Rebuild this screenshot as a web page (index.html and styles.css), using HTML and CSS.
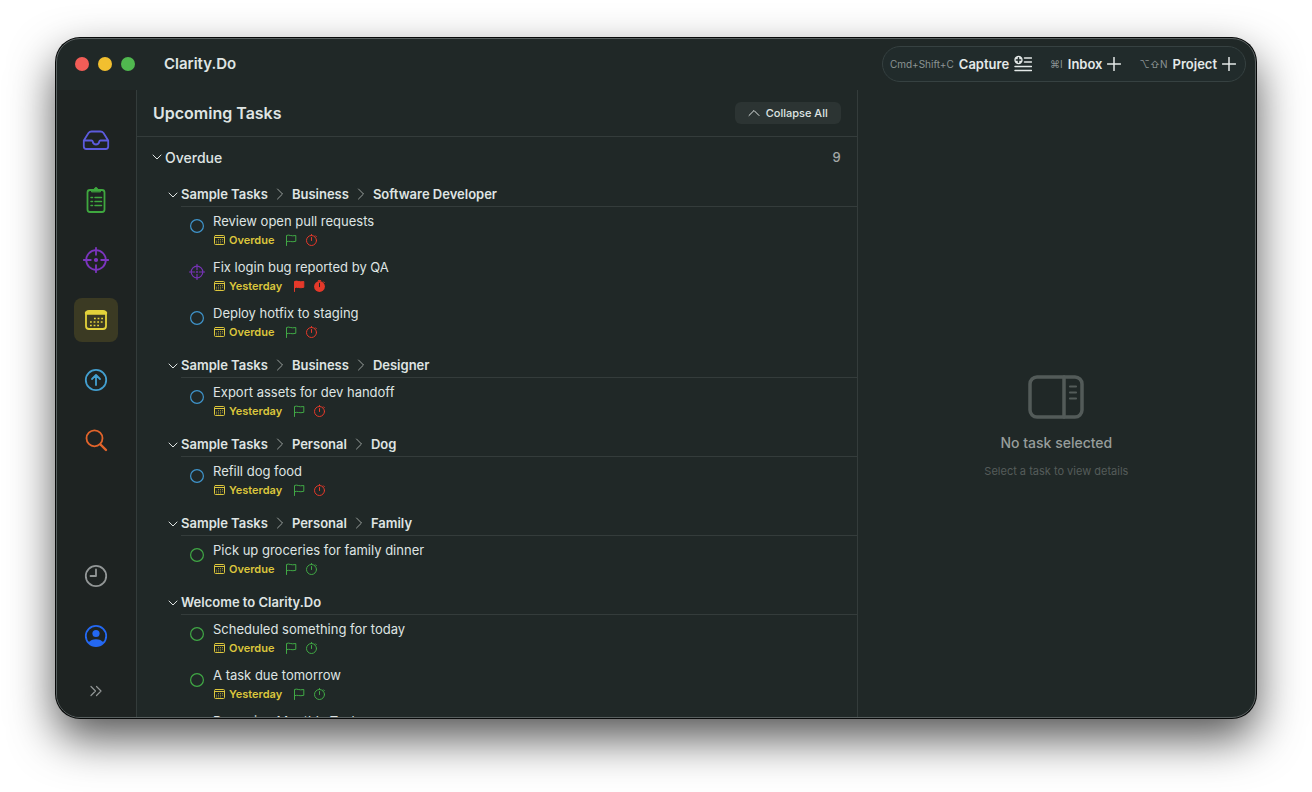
FILE: index.html
```
<!DOCTYPE html>
<html lang="en">
<head>
    <meta charset="UTF-8">
    <meta name="viewport" content="width=device-width, initial-scale=1.0">
    <title>Clarity.Do</title>
    <link rel="stylesheet" href="styles.css">
</head>
<body>
    <!-- shared icons -->
    <svg class="sprite" aria-hidden="true">
        <symbol id="down" viewBox="0 0 10 10"><path d="M1 3l4 4 4-4"/></symbol>
        <symbol id="right" viewBox="0 0 8 12"><path d="M1.5 1l5 5-5 5"/></symbol>
        <symbol id="plus" viewBox="0 0 14 14"><path d="M7 .5v13M.5 7h13"/></symbol>
        <symbol id="circle" viewBox="0 0 16 16"><circle cx="8" cy="8" r="6.4"/></symbol>
        <symbol id="target" viewBox="0 0 16 16"><circle cx="8" cy="8" r="5.8"/><path d="M8 .5v5.2M8 10.3v5.2M.5 8h5.200M10.3 8h5.2"/><circle cx="8" cy="8" r=".4"/></symbol>
        <symbol id="cal" viewBox="0 0 12 12">
            <rect x="1.5" y="1.5" width="10" height="9" rx="1"/>
            <path d="M2 3.500h9"/>
            <path d="M5 5.5h5M3 7.200h7M3 8.900h5" stroke-width=".8" stroke-linecap="butt" stroke-dasharray="1 1" opacity=".8"/>
        </symbol>
        <symbol id="flag" viewBox="0 0 12 12"><path d="M1.5 11.5V1.500c2.500-1.300 4.500 1.200 9.300 0V7.300C6.500 8.600 4.500 6.400 1.500 7.700"/></symbol>
        <symbol id="timer" viewBox="0 0 12 12"><circle cx="5.5" cy="6.500" r="5"/><path d="M5.500 .5v1M5.500 3.500v3M9.500 1.800l.8.8"/></symbol>
        <symbol id="timer-full" viewBox="0 0 12 12"><circle cx="5.5" cy="6.500" r="5.400" fill="currentColor" stroke="none"/><path d="M4.300.6h2.400M9.500 1.800l.8.8"/><path d="M5.5 3.200v3.500" stroke="#202827"/></symbol>
    </svg>

    <div class="window">
        <header class="titlebar">
            <div class="lights">
                <button class="light light-red" aria-label="Close"></button>
                <button class="light light-yellow" aria-label="Minimize"></button>
                <button class="light light-green" aria-label="Zoom"></button>
            </div>
            <h1 class="app-name">Clarity.Do</h1>
            <div class="toolbar">
                <button class="tool"><span class="keys">Cmd+Shift+C</span>Capture
                    <svg class="tool-capture" viewBox="0 0 18 18"><circle cx="4.5" cy="5" r="4.2" fill="#e4e9e8" stroke="none"/><path d="M4.5 2.800v4.400M2.300 5h4.400" stroke="#212b2b"/><path d="M10.500 3h7M10.500 7h7M1 11.500h16.500M1 15.500h16.500"/></svg>
                </button>
                <button class="tool"><span class="keys">⌘I</span>Inbox <svg class="tool-plus"><use href="#plus"/></svg></button>
                <button class="tool"><span class="keys">⌥⇧N</span>Project <svg class="tool-plus"><use href="#plus"/></svg></button>
            </div>
        </header>

        <div class="content">
            <nav class="sidebar">
                <button class="nav nav-inbox" aria-label="Inbox">
                    <svg viewBox="0 0 28 28"><path d="M1.800 14.500L6.500 7q1.100-1.500 3-1.500h9q1.900 0 3 1.500l4.700 7.500V20.500q0 2.500-2.500 2.500H4.300q-2.500 0-2.500-2.500zM2 14.500h7.500q1 0 1.200 1c.8 4 5.800 4 6.600 0q.2-1 1.200-1H26"/></svg>
                </button>
                <button class="nav nav-list" aria-label="Tasks">
                    <svg viewBox="0 0 28 28"><rect x="5.500" y="4" width="17" height="22" rx="2.500"/><path d="M9.500 5.500q0-2 2-2h.7c.3-2.800 3.300-2.800 3.600 0h.7q2 0 2 2z" fill="currentColor" stroke-width="1"/><path d="M13 11.500h6.500M13 15.500h6.500M13 19.500h6.500M9 11.500h1.500M9 15.500h1.500M9 19.500h1.500" stroke-width="1.500"/></svg>
                </button>
                <button class="nav nav-focus" aria-label="Focus">
                    <svg viewBox="0 0 28 28"><circle cx="14" cy="14" r="9.800"/><path d="M14 1.800v7M14 19.200v7M1.800 14h7M19.200 14h7"/><circle cx="14" cy="14" r="1.200" fill="currentColor"/></svg>
                </button>
                <button class="nav nav-upcoming active" aria-label="Upcoming">
                    <svg viewBox="0 0 28 28"><rect x="4" y="5" width="20" height="18" rx="3"/><path d="M4.500 7h19" stroke-width="3.500"/><path d="M12 12.500h9M8 16h13M8 19.500h9" stroke-width="1.600" stroke-linecap="butt" stroke-dasharray="1.800 1.800"/></svg>
                </button>
                <button class="nav nav-up" aria-label="Next up">
                    <svg viewBox="0 0 28 28"><circle cx="14" cy="14" r="10.200"/><path d="M14 19V9M10 13l4-4 4 4"/></svg>
                </button>
                <button class="nav nav-search" aria-label="Search">
                    <svg viewBox="0 0 28 28"><circle cx="12.500" cy="12.300" r="8"/><path d="M18.500 18.500l5.500 5.500" stroke-width="2.400"/></svg>
                </button>
                <button class="nav nav-recent" aria-label="Recent">
                    <svg viewBox="0 0 28 28"><circle cx="14" cy="14" r="10.200"/><path d="M14 7.500V14H8.500"/></svg>
                </button>
                <button class="nav nav-account" aria-label="Account">
                    <svg viewBox="0 0 28 28"><circle cx="14" cy="14" r="10.200"/><circle cx="14" cy="11.500" r="3.600" fill="currentColor" stroke="none"/><path d="M6.500 20.500c3-4.500 12-4.500 15 0q-3 3.700-7.500 3.700t-7.500-3.700z" fill="currentColor" stroke="none"/></svg>
                </button>
                <button class="nav nav-expand" aria-label="Expand sidebar">
                    <svg viewBox="0 0 14 14"><path d="M2 2.500L6.500 7 2 11.500M7.500 2.500L12 7l-4.500 4.500"/></svg>
                </button>
            </nav>

            <main class="list">
                <div class="list-head">
                    <h2>Upcoming Tasks</h2>
                    <button class="collapse"><svg viewBox="0 0 12 8"><path d="M1 6.500l5-5 5 5"/></svg>Collapse All</button>
                </div>

                <div class="list-scroll">
                    <button class="section"><svg class="down"><use href="#down"/></svg>Overdue <span class="count">9</span></button>

                    <section class="group">
                        <button class="group-head"><svg class="down"><use href="#down"/></svg>
                            <span class="crumbs">Sample Tasks<svg><use href="#right"/></svg>Business<svg><use href="#right"/></svg>Software Developer</span></button>
                        <div class="task">
                            <button class="check blue" aria-label="Complete"><svg><use href="#circle"/></svg></button>
                            <div>
                                <p class="name">Review open pull requests</p>
                                <p class="meta"><svg><use href="#cal"/></svg><span>Overdue</span><svg class="green"><use href="#flag"/></svg><svg class="red"><use href="#timer"/></svg></p>
                            </div>
                        </div>
                        <div class="task">
                            <button class="check purple" aria-label="Complete"><svg><use href="#target"/></svg></button>
                            <div>
                                <p class="name">Fix login bug reported by QA</p>
                                <p class="meta"><svg><use href="#cal"/></svg><span>Yesterday</span><svg class="red full"><use href="#flag"/></svg><svg class="red"><use href="#timer-full"/></svg></p>
                            </div>
                        </div>
                        <div class="task">
                            <button class="check blue" aria-label="Complete"><svg><use href="#circle"/></svg></button>
                            <div>
                                <p class="name">Deploy hotfix to staging</p>
                                <p class="meta"><svg><use href="#cal"/></svg><span>Overdue</span><svg class="green"><use href="#flag"/></svg><svg class="red"><use href="#timer"/></svg></p>
                            </div>
                        </div>
                    </section>

                    <section class="group">
                        <button class="group-head"><svg class="down"><use href="#down"/></svg>
                            <span class="crumbs">Sample Tasks<svg><use href="#right"/></svg>Business<svg><use href="#right"/></svg>Designer</span></button>
                        <div class="task">
                            <button class="check blue" aria-label="Complete"><svg><use href="#circle"/></svg></button>
                            <div>
                                <p class="name">Export assets for dev handoff</p>
                                <p class="meta"><svg><use href="#cal"/></svg><span>Yesterday</span><svg class="green"><use href="#flag"/></svg><svg class="red"><use href="#timer"/></svg></p>
                            </div>
                        </div>
                    </section>

                    <section class="group">
                        <button class="group-head"><svg class="down"><use href="#down"/></svg>
                            <span class="crumbs">Sample Tasks<svg><use href="#right"/></svg>Personal<svg><use href="#right"/></svg>Dog</span></button>
                        <div class="task">
                            <button class="check blue" aria-label="Complete"><svg><use href="#circle"/></svg></button>
                            <div>
                                <p class="name">Refill dog food</p>
                                <p class="meta"><svg><use href="#cal"/></svg><span>Yesterday</span><svg class="green"><use href="#flag"/></svg><svg class="red"><use href="#timer"/></svg></p>
                            </div>
                        </div>
                    </section>

                    <section class="group">
                        <button class="group-head"><svg class="down"><use href="#down"/></svg>
                            <span class="crumbs">Sample Tasks<svg><use href="#right"/></svg>Personal<svg><use href="#right"/></svg>Family</span></button>
                        <div class="task">
                            <button class="check green" aria-label="Complete"><svg><use href="#circle"/></svg></button>
                            <div>
                                <p class="name">Pick up groceries for family dinner</p>
                                <p class="meta"><svg><use href="#cal"/></svg><span>Overdue</span><svg class="green"><use href="#flag"/></svg><svg class="green"><use href="#timer"/></svg></p>
                            </div>
                        </div>
                    </section>

                    <section class="group">
                        <button class="group-head"><svg class="down"><use href="#down"/></svg>
                            <span class="crumbs">Welcome to Clarity.Do</span></button>
                        <div class="task">
                            <button class="check green" aria-label="Complete"><svg><use href="#circle"/></svg></button>
                            <div>
                                <p class="name">Scheduled something for today</p>
                                <p class="meta"><svg><use href="#cal"/></svg><span>Overdue</span><svg class="green"><use href="#flag"/></svg><svg class="green"><use href="#timer"/></svg></p>
                            </div>
                        </div>
                        <div class="task">
                            <button class="check green" aria-label="Complete"><svg><use href="#circle"/></svg></button>
                            <div>
                                <p class="name">A task due tomorrow</p>
                                <p class="meta"><svg><use href="#cal"/></svg><span>Yesterday</span><svg class="green"><use href="#flag"/></svg><svg class="green"><use href="#timer"/></svg></p>
                            </div>
                        </div>
                        <div class="task">
                            <button class="check green" aria-label="Complete"><svg><use href="#circle"/></svg></button>
                            <div>
                                <p class="name">Recurring Monthly Task</p>
                            </div>
                        </div>
                    </section>
                </div>
            </main>

            <aside class="detail">
                <svg viewBox="0 0 56 44"><rect x="2" y="2" width="52" height="40" rx="7" stroke-width="3.500"/><path d="M36 2v40" stroke-width="3.500"/><path d="M42 11.500h6M42 17.500h6M42 23.500h6" stroke-width="2.200"/></svg>
                <p class="detail-title">No task selected</p>
                <p class="detail-hint">Select a task to view details</p>
            </aside>
        </div>
    </div>
</body>
</html>
```
FILE: styles.css
```
*{
    margin: 0;
    padding: 0;
    box-sizing: border-box;
}
body {
    display: flex;
    height: 100vh;
    padding: 38px 56px 74px;
    background: #fff;
    color: #dfe4e3;
    font-family: Inter, "Liberation Sans", sans-serif;
    font-size: 13px;
    overflow: hidden;
}
button {
    border: 0;
    background: none;
    color: inherit;
    font: inherit;
    text-align: left;
}
svg {
    flex: none;
    fill: none;
    stroke: currentColor;
    stroke-linecap: round;
    stroke-linejoin: round;
}
.sprite {
    position: absolute;
    width: 0;
    height: 0;
}

.window {
    flex: 1;
    display: flex;
    flex-direction: column;
    min-width: 0;
    border: 1px solid #596060;
    border-radius: 24px;
    background: #202827;
    box-shadow: 0 0 0 1px #080a0a, 0 20px 46px rgba(0, 0, 0, 0.68);
    overflow: hidden;
}

/* title bar */
.titlebar {
    display: flex;
    align-items: center;
    height: 51px;
    padding: 0 9px 2px 18px;
}
.lights {
    display: flex;
    gap: 9px;
}
.light {
    width: 14px;
    height: 14px;
    border-radius: 50%;
}
.light-red { background: #f25d57; }
.light-yellow { background: #f2bf2f; }
.light-green { background: #50b84f; }
.app-name {
    margin-left: 29px;
    font-size: 15px;
    font-weight: 600;
}
.toolbar {
    display: flex;
    align-items: center;
    gap: 18px;
    height: 36px;
    margin-left: auto;
    padding: 0 9px 0 7px;
    border: 1px solid #364141;
    border-radius: 18px;
    background: #212b2b;
}
.tool {
    display: flex;
    align-items: center;
    gap: 5px;
    color: #e4e9e8;
    font-weight: 600;
}
.keys {
    color: #8b9393;
    font-size: 10px;
    font-weight: 400;
}
.tool-capture {
    width: 18px;
    height: 18px;
    stroke-width: 1.5;
}
.tool-plus {
    width: 14px;
    height: 14px;
    stroke-width: 1.5;
}

.content {
    flex: 1;
    display: flex;
    min-height: 0;
}

/* sidebar */
.sidebar {
    display: flex;
    flex-direction: column;
    align-items: center;
    gap: 16px;
    width: 80px;
    padding: 28px 2px 9px 0;
    border-right: 1px solid #343c3b;
    background: #1e2322;
}
.nav {
    display: flex;
    align-items: center;
    justify-content: center;
    width: 44px;
    height: 44px;
    border-radius: 8px;
}
.nav svg {
    width: 28px;
    height: 28px;
    stroke-width: 1.8;
}
.nav.active { background: #3b3a23; }
.nav-inbox { color: #5c5bdc; }
.nav-list { color: #3fa83f; }
.nav-focus { color: #7c35bf; }
.nav-upcoming { color: #e3d23b; }
.nav-up { color: #439fd0; }
.nav-search { color: #e2642b; }
.nav-recent {
    margin-top: auto;
    color: #929696;
}
.nav-account { color: #2468f2; }
.nav-expand {
    height: 34px;
    color: #929696;
}
.nav-expand svg {
    width: 14px;
    height: 14px;
    stroke-width: 1.2;
}

/* task list */
.list {
    flex: 721 0 0;
    display: flex;
    flex-direction: column;
    min-width: 0;
    border-right: 1px solid #343c3b;
}
.list-head {
    display: flex;
    align-items: center;
    justify-content: space-between;
    height: 47px;
    padding: 0 16px;
    border-bottom: 1px solid #343c3b;
}
.list-head h2 {
    font-size: 16px;
    font-weight: 600;
}
.collapse {
    display: flex;
    align-items: center;
    gap: 6px;
    height: 22px;
    padding: 0 13px;
    border-radius: 6px;
    background: #2c3433;
    font-size: 11px;
    font-weight: 500;
}
.collapse svg {
    width: 12px;
    height: 8px;
}
.list-scroll {
    flex: 1;
    min-height: 0;
    overflow-y: auto;
    scrollbar-width: none;
}
.section {
    display: flex;
    align-items: center;
    gap: 3px;
    width: 100%;
    height: 40px;
    margin-bottom: 3px;
    padding: 0 16px 0 15px;
    font-size: 14px;
    font-weight: 500;
}
.count {
    margin-left: auto;
    color: #a3a9a8;
    font-size: 13px;
}
.down {
    width: 10px;
    height: 10px;
}
.group {
    padding-bottom: 6px;
}
.group-head {
    display: flex;
    align-items: center;
    gap: 3px;
    width: 100%;
    padding: 2px 0 0 31px;
    font-weight: 600;
}
.crumbs {
    flex: 1;
    display: flex;
    align-items: center;
    gap: 8px;
    height: 25px;
    border-bottom: 1px solid #343c3b;
}
.crumbs svg {
    width: 8px;
    height: 12px;
    color: #9ba19f;
}
.task {
    display: flex;
    gap: 8px;
    height: 46px;
    padding: 5px 16px 5px 52px;
}
.check {
    width: 16px;
    height: 16px;
    margin-top: 6px;
}
.check svg {
    display: block;
    width: 16px;
    height: 16px;
    stroke-width: 1.2;
}
.name {
    line-height: 18px;
}
.meta {
    display: flex;
    align-items: center;
    height: 16px;
    margin-top: 2px;
    color: #dcc63c;
    font-size: 11px;
    font-weight: 600;
}
.meta svg {
    width: 12px;
    height: 12px;
}
.meta span {
    margin: 0 11px 0 4px;
}
.meta span + svg {
    margin-right: 9px;
}
.blue { color: #3f94cb; }
.purple { color: #7633b5; }
.green { color: #40a845; }
.red { color: #e5392a; }
.full { fill: currentColor; }

/* empty detail pane */
.detail {
    flex: 398 0 0;
    display: flex;
    flex-direction: column;
    align-items: center;
    justify-content: center;
    min-width: 0;
    padding-top: 46px;
}
.detail svg {
    width: 56px;
    height: 44px;
    color: #535b59;
}
.detail-title {
    margin-top: 14px;
    color: #979d9b;
    font-size: 14px;
    font-weight: 500;
    line-height: 20px;
}
.detail-hint {
    margin-top: 10px;
    color: #555c5a;
    font-size: 11px;
    line-height: 16px;
}
```
